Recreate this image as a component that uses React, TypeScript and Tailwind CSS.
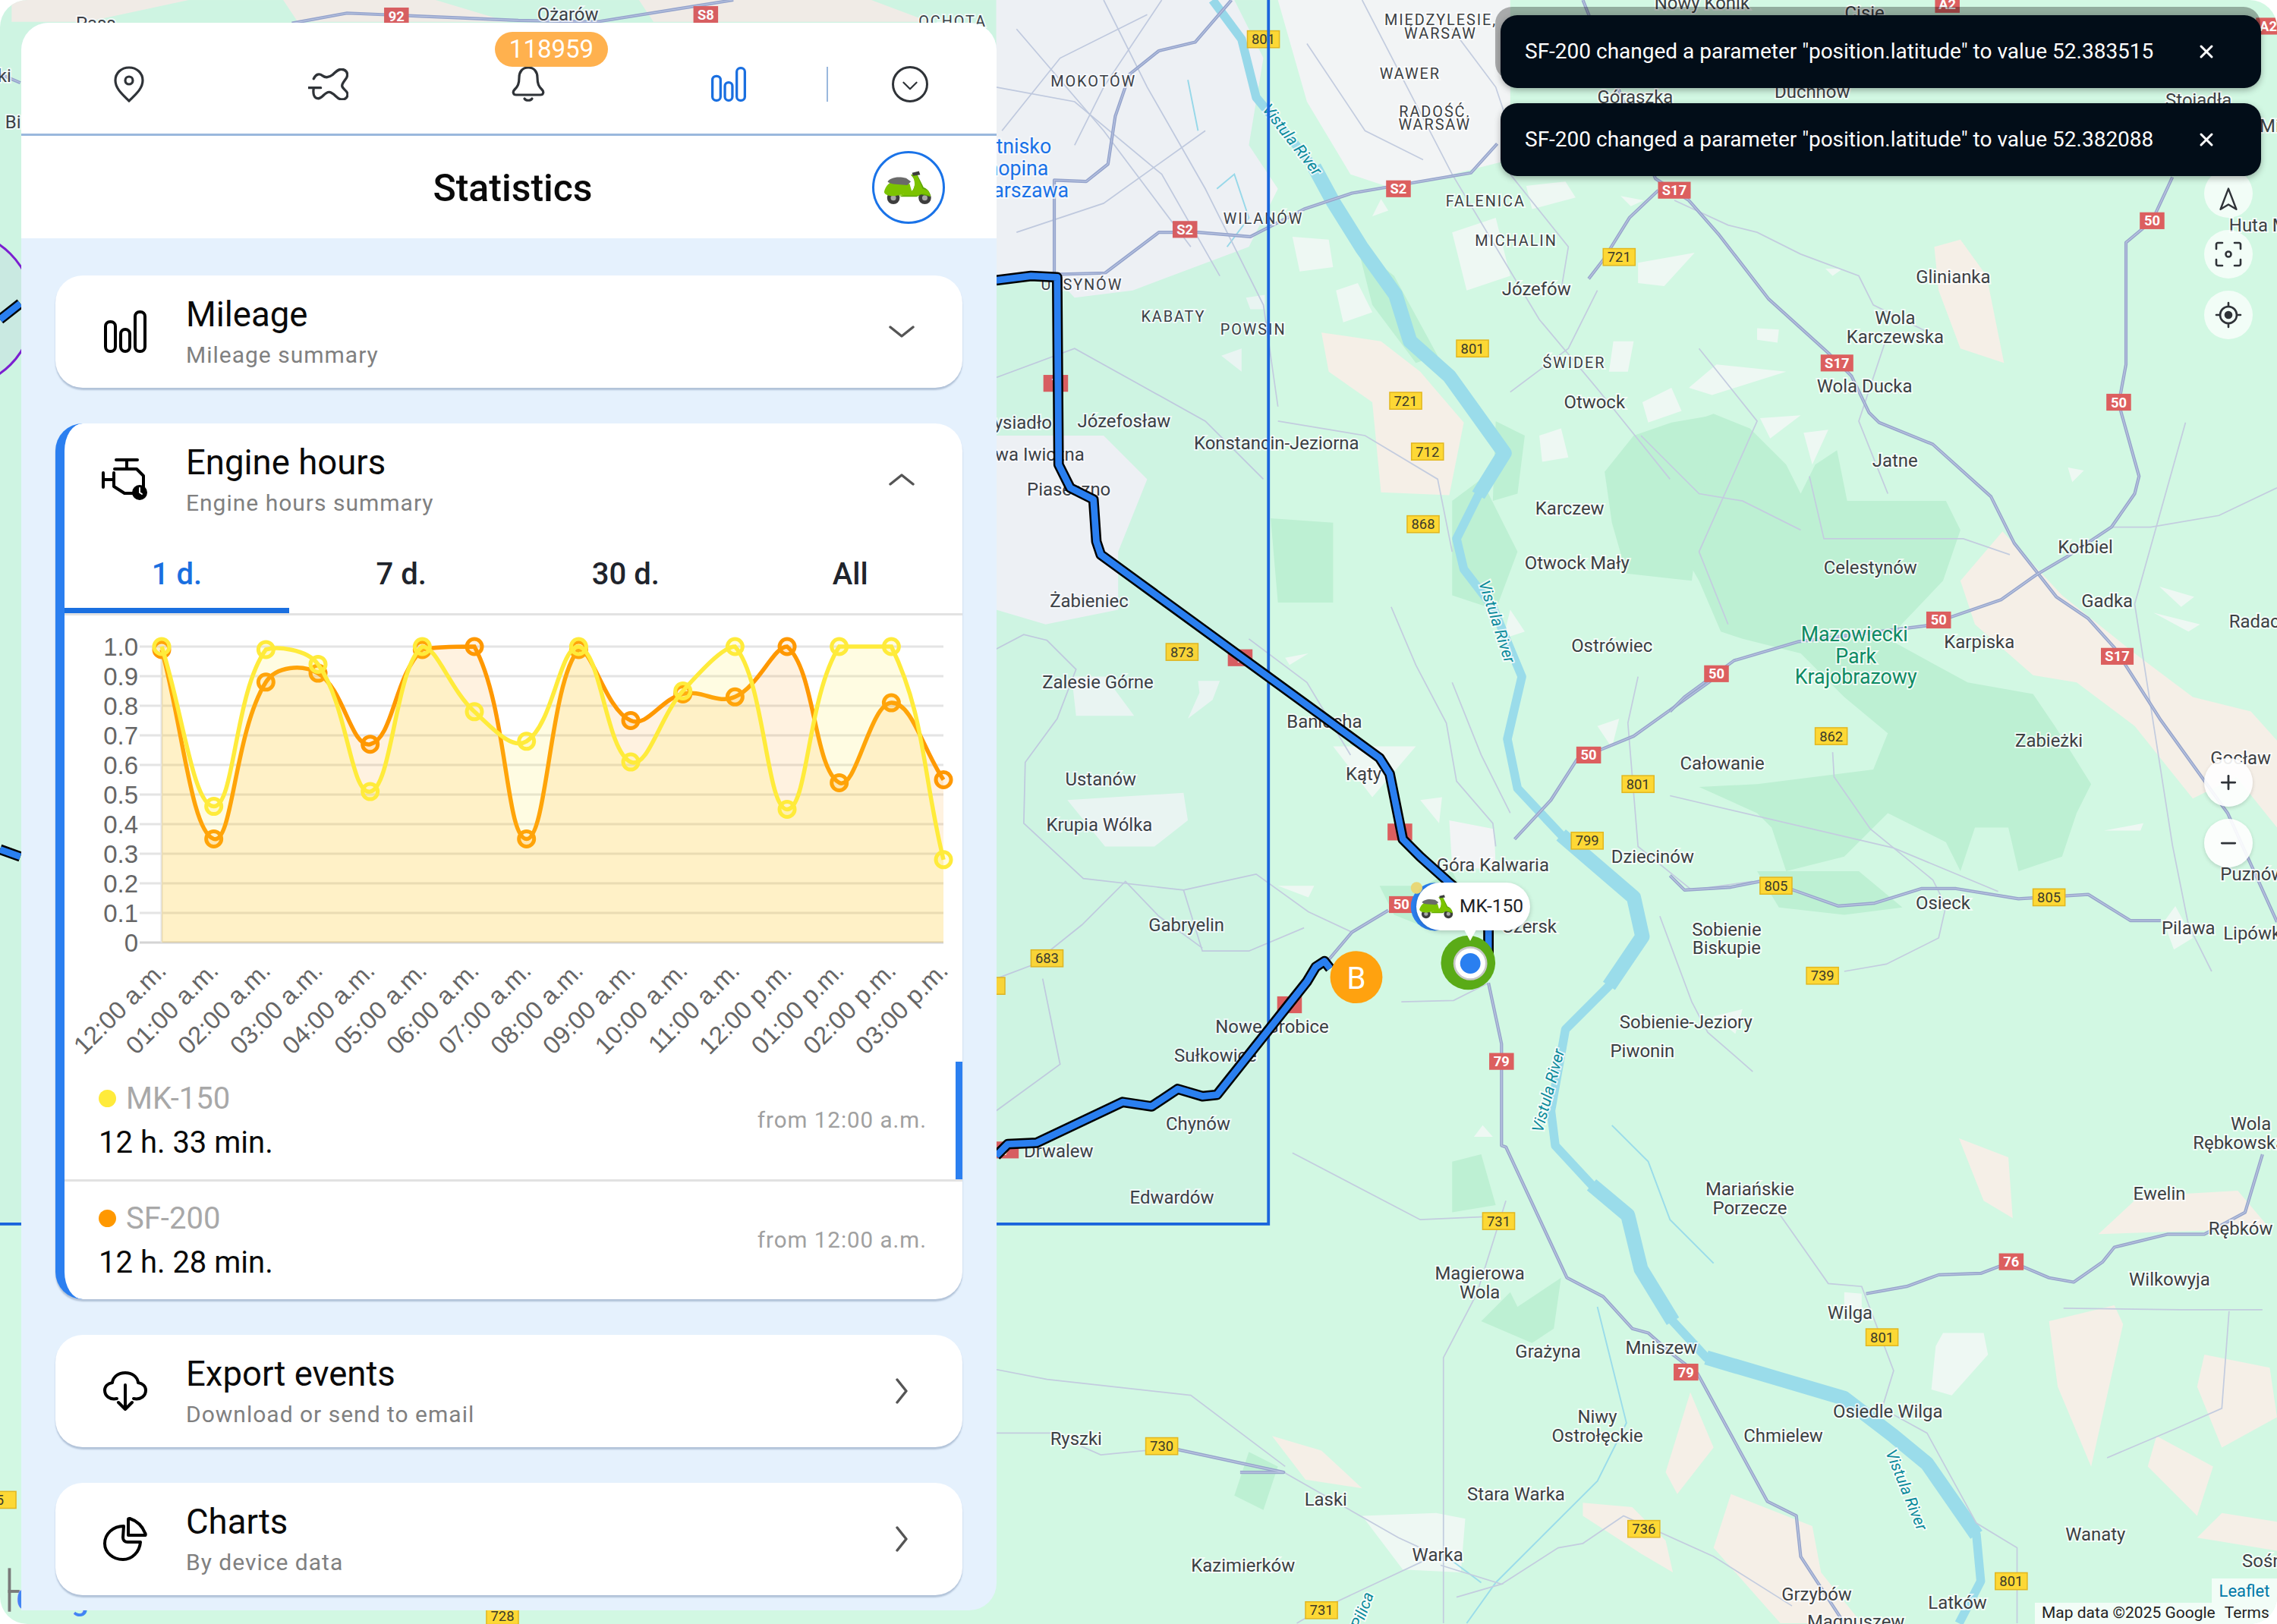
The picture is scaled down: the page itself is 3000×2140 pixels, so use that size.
import React from "react";
import { X, Plus, Minus } from "lucide-react";

const ROBOTO = "font-['Roboto',sans-serif]";

type Pt = [number, number];

const toLine = (pts: Pt[]) => "M" + pts.map((p) => p.join(" ")).join("L");
const toPoly = (pts: Pt[]) => pts.map((p) => p.join(",")).join(" ");

// ---- map data, all coordinates in the 1568 wide viewBox of the map svg ----
const parks: Pt[][] = [
  [[1150,296],[1180,285],[1205,295],[1230,320],[1240,340],[1250,320],[1265,310],[1272,345],[1300,345],[1340,345],[1350,365],[1338,400],[1300,440],[1355,470],[1400,478],[1415,500],[1440,540],[1430,560],[1420,590],[1390,600],[1383,570],[1360,570],[1350,600],[1340,580],[1300,560],[1270,590],[1230,600],[1220,570],[1210,560],[1170,542],[1210,540],[1290,530],[1300,505],[1270,480],[1240,450],[1200,440],[1185,435],[1170,400],[1150,365]],
  [[1105,325],[1125,300],[1151,291],[1180,286],[1165,400],[1120,395],[1110,360]],
  [[1210,600],[1250,600],[1280,600],[1310,625],[1270,630],[1225,625]],
  [[875,357],[918,360],[918,415],[880,415]],
  [[1000,345],[1020,330],[1045,380],[1030,420],[1000,410]],
  [[980,610],[1000,600],[1010,620],[985,640],[960,630],[950,610]],
  [[1040,890],[1045,900],[1075,880],[1070,915],[1055,925],[1020,910]],
  [[1000,800],[1020,795],[1030,830],[1000,835]],
  [[860,1000],[880,1010],[870,1040],[850,1030]],
  [[935,170],[960,190],[990,245],[975,250],[945,210]],
  [[1030,290],[1050,300],[1045,340],[1028,345]],
];

const sand: Pt[][] = [
  [[910,229],[951,235],[978,256],[1008,291],[998,341],[951,339],[945,277],[915,256]],
  [[1379,366],[1420,410],[1470,450],[1510,480],[1550,490],[1568,510],[1568,570],[1540,535],[1510,550],[1470,500],[1430,470],[1400,465],[1360,430],[1350,400]],
  [[1349,784],[1383,797],[1386,839],[1366,827]],
  [[1473,824],[1541,820],[1563,846],[1445,850]],
  [[1411,910],[1456,899],[1462,912],[1440,1010],[1417,955]],
  [[1518,933],[1563,942],[1568,976],[1530,997],[1513,955]],
  [[1485,989],[1524,1010],[1513,1044],[1479,1010]],
  [[1530,1042],[1568,1048],[1568,1068],[1513,1059]],
  [[876,989],[910,999],[938,1025],[899,1019]],
  [[1164,959],[1180,997],[1155,1029],[1147,1014]],
  [[1090,1035],[1124,1038],[1147,1061],[1152,1083],[1130,1070],[1090,1044]],
  [[1192,1029],[1248,1051],[1254,1083],[1282,1118],[1226,1118],[1180,1066]],
  [[1332,170],[1350,165],[1368,190],[1380,250],[1350,240],[1335,200]],
  [[8,0],[130,0],[60,15],[8,15]],
  [[195,0],[300,0],[350,15],[205,15]],
  [[440,0],[600,0],[640,15],[450,15]],
];

const urban: Pt[][] = [
  [[686,0],[850,0],[870,40],[860,100],[880,130],[860,170],[780,200],[740,205],[726,190],[686,190]],
  [[880,0],[1040,0],[1040,110],[1000,120],[960,130],[930,120],[900,70]],
  [[686,300],[760,300],[790,330],[770,380],[770,420],[720,430],[686,420]],
  [[998,565],[1029,571],[1030,599],[1000,597]],
];

// small white settlements scattered over the green
const patches: Pt[][] = [
  [[1163,267],[1182,251],[1230,256],[1179,272]], [[1212,288],[1240,286],[1219,302]], [[1242,298],[1259,296],[1248,320]],
  [[1220,334],[1235,334],[1248,374],[1239,374]], [[1262,382],[1294,379],[1318,392],[1294,414],[1267,406]],
  [[1424,322],[1435,324],[1427,332]], [[1487,404],[1511,411],[1502,418]], [[1483,422],[1515,430],[1507,435]],
  [[1449,572],[1476,567],[1474,572]], [[1490,635],[1498,624],[1510,646],[1497,654]], [[1116,135],[1132,138],[1123,142]],
  [[1128,181],[1167,174],[1146,197],[1128,195]], [[1210,226],[1225,227],[1224,236],[1210,234]], [[1257,185],[1269,185],[1262,190]],
  [[890,163],[915,165],[918,184],[895,187]], [[951,137],[956,145],[945,149]], [[1051,128],[1078,125],[1085,136],[1055,144]],
  [[1111,235],[1125,235],[1121,256],[1108,256]], [[1131,277],[1151,267],[1158,283],[1135,291]], [[841,245],[855,240],[855,256]],
  [[858,205],[871,203],[871,213],[861,213]], [[885,453],[901,450],[888,458]], [[825,469],[840,469],[835,482],[818,495],[826,477]],
  [[738,466],[761,466],[781,493],[741,493]], [[735,551],[815,546],[818,565],[795,583],[761,583]], [[918,514],[975,514],[945,549]],
  [[978,551],[993,549],[991,567]], [[1021,775],[1028,783],[1015,783]], [[880,610],[905,610],[901,618]],
  [[1270,890],[1282,891],[1282,903],[1270,901]], [[1338,918],[1366,918],[1369,933],[1344,961],[1330,957],[1333,927]],
  [[938,1044],[989,1042],[1009,1046],[1006,1083],[966,1081]], [[1000,160],[1030,150],[1040,190],[1010,200]],
  [[1060,300],[1075,295],[1080,315],[1062,318]], [[920,200],[935,195],[945,215],[925,222]], [[1180,700],[1200,695],[1195,712]],
  [[1040,420],[1050,435],[1035,440]], [[1100,500],[1115,495],[1110,515]], [[1200,370],[1220,375],[1205,395]],
];

const river: Pt[] = [[835,0],[855,27],[865,67],[905,115],[918,139],[938,171],[961,203],[971,235],[998,259],[1021,291],[1036,312],[1018,341],[1003,371],[1008,392],[1028,418],[1048,466],[1038,509],[1045,543],[1075,575],[1125,618],[1131,645],[1108,679],[1078,709],[1068,765],[1071,789],[1096,816],[1121,837],[1130,874],[1152,910],[1175,935],[1226,950],[1270,963],[1304,989],[1327,1008],[1361,1057],[1364,1089],[1349,1118]];

const riverWide: Pt[][] = [
  [[905,115],[918,139],[938,171],[961,203],[971,235],[998,259],[1021,291],[1036,312],[1018,341]],
  [[1075,575],[1125,618],[1131,645],[1108,679]],
  [[1096,816],[1121,837],[1130,874],[1152,910]],
  [[1175,935],[1226,950],[1270,963],[1304,989],[1327,1008],[1361,1057]],
];

const streams: Pt[][] = [
  [[818,55],[825,90]],
  [[838,130],[850,120],[860,150],[845,170]],
  [[1110,775],[1135,800],[1150,840],[1180,870]],
  [[1100,900],[1120,980],[1100,1020],[1060,1060],[1030,1090],[1010,1118]],
  [[1000,1075],[1020,1090]],
];

const motorways: Pt[][] = [
  [[1090,0],[1122,80],[1140,123],[1163,138],[1184,162],[1218,206],[1260,244],[1275,259],[1287,284],[1294,291],[1331,306],[1371,342],[1387,374],[1416,411],[1438,426],[1456,446],[1488,496],[1534,560],[1568,635]],
  [[956,627],[931,642],[915,661]],
  [[1043,578],[1068,551],[1086,523],[1125,507],[1178,469]],
  [[1150,490],[1160,480],[1194,455],[1238,442],[1326,431],[1378,413],[1402,396],[1424,383],[1454,363],[1470,340],[1473,328],[1459,278],[1464,251],[1464,167],[1482,152],[1496,122]],
  [[1025,677],[1034,719],[1034,789],[1037,790],[1079,880],[1104,893],[1124,915],[1135,918],[1152,933],[1169,946],[1217,1034],[1237,1044],[1240,1072],[1270,1118]],
  [[848,0],[823,29],[798,35],[778,51],[768,80],[763,113],[748,125],[726,124],[726,189]],
  [[726,189],[761,188],[798,160],[825,160],[861,163],[898,144],[931,133],[1013,119],[1031,99]],
  [[1285,891],[1313,886],[1335,878],[1364,877],[1385,869],[1411,880],[1428,883],[1448,869],[1456,859],[1493,850],[1518,850],[1546,835],[1558,795]],
  [[1150,603],[1160,613],[1192,611],[1212,607],[1235,613],[1266,624],[1291,622],[1323,612],[1347,612],[1390,619],[1438,616],[1467,634],[1488,634]],
  [[201,16],[239,9],[357,14],[411,15],[480,4],[505,0]],
  [[0,51],[14,57]],
  [[1094,192],[1104,179],[1122,150],[1142,131]],
  [[854,1014],[884,1014],[800,996]],
];

const minorRoads: Pt[][] = [
  [[938,0],[1000,120],[1060,220],[1101,269],[1150,330]],
  [[1153,138],[1190,155],[1210,160],[1240,175],[1280,190],[1290,210],[1330,230]],
  [[958,418],[975,458],[996,498],[1003,538],[1028,567],[1030,583]],
  [[686,447],[705,437],[721,441],[741,461],[728,495],[706,525],[705,567],[746,605],[815,613],[865,602],[901,628],[931,642]],
  [[815,613],[828,655],[860,655],[898,639]],
  [[686,674],[710,665],[745,637],[775,607],[798,631],[828,653]],
  [[718,674],[730,733],[686,765]],
  [[965,690],[1001,689],[1025,677]],
  [[1128,466],[1121,498],[1128,583],[1165,613],[1207,607]],
  [[1143,631],[1165,690],[1176,711],[1207,738]],
  [[1226,837],[1259,884],[1282,886],[1304,944],[1296,970],[1327,987],[1361,1049],[1389,1066],[1389,1118]],
  [[685,987],[724,987],[758,1002],[789,999]],
  [[884,1014],[963,1059],[989,1071],[910,1108],[893,1118]],
  [[992,1078],[1034,1091],[1003,1100]],
  [[1034,1091],[1073,1066],[1090,1063],[1118,1044],[1180,1072],[1234,1106]],
  [[685,943],[721,950],[820,961],[885,1010]],
  [[994,1118],[994,935],[1017,891],[1037,827]],
  [[890,794],[978,840],[1022,838]],
  [[1421,901],[1501,902],[1558,902]],
  [[1451,1004],[1498,984],[1530,970],[1535,903]],
  [[1454,363],[1481,363],[1528,355],[1568,336]],
  [[1246,328],[1256,371],[1352,371],[1384,382]],
  [[1262,518],[1263,535],[1288,571],[1304,584],[1331,606],[1340,624],[1335,646],[1299,664],[1270,669]],
  [[1150,548],[1304,584],[1376,614]],
  [[1505,291],[1470,416],[1496,582],[1507,637],[1523,669]],
  [[760,0],[790,60],[830,130],[870,210],[880,280]],
  [[686,60],[740,70],[800,120],[840,190]],
  [[686,260],[740,240],[830,290],[870,330]],
  [[880,290],[940,300],[990,330],[1000,380]],
  [[1100,200],[1080,240],[1040,270]],
  [[1130,300],[1170,340],[1200,345],[1240,365]],
  [[1040,560],[1020,520],[1000,470]],
  [[800,0],[760,60],[740,100]],
  [[700,20],[760,90],[820,170]],
  [[690,90],[730,40],[790,10]],
  [[700,160],[760,140],[830,90]],
  [[900,30],[940,90],[980,110]],
  [[1000,20],[1030,60],[1040,90]],
  [[1170,240],[1210,290],[1170,380],[1190,430]],
  [[1300,230],[1280,290],[1300,340]],
  [[860,440],[900,470],[930,520]],
  [[1040,120],[1080,170],[1075,200]],
];

const shieldsRed: [string, number, number][] = [
  ["92", 273, 11], ["S8", 486, 10], ["A2", 1341, 3], ["A2", 1562, 18], ["S17", 1153, 131],
  ["50", 1482, 152], ["S17", 1265, 250], ["S2", 963, 130], ["S2", 816, 158], ["7", 727, 264],
  ["7", 854, 453], ["50", 1182, 464], ["50", 1094, 520], ["7", 964, 573], ["50", 965, 623],
  ["79", 1034, 731], ["7", 888, 692], ["7", 693, 792], ["50", 1459, 277], ["50", 1335, 427],
  ["S17", 1458, 452], ["76", 1385, 869], ["79", 1161, 945],
];

const shieldsYellow: [string, number, number][] = [
  ["801", 870, 27], ["801", 1014, 240], ["721", 1115, 177], ["721", 968, 276], ["712", 983, 311],
  ["868", 980, 361], ["873", 814, 449], ["683", 721, 660], ["7", 681, 679], ["801", 1128, 540],
  ["799", 1093, 579], ["862", 1261, 507], ["805", 1223, 610], ["805", 1411, 618], ["739", 1255, 672],
  ["731", 1032, 841], ["801", 1296, 921], ["730", 800, 996], ["736", 1132, 1053], ["731", 910, 1109],
  ["801", 1385, 1089], ["728", 346, 1113], ["5", 0, 1033],
];

const places: [string, number, number][] = [
  ["Pass", 66, 16], ["Ożarów", 391, 10], ["Józefów", 1058, 199], ["Otwock", 1098, 277], ["Karczew", 1081, 350],
  ["Otwock Mały", 1086, 388], ["Józefosław", 774, 290], ["Mysiadło", 699, 291], ["Nowa Iwiczna", 708, 313],
  ["Konstancin-Jeziorna", 879, 305], ["Piaseczno", 736, 337], ["Żabieniec", 750, 414], ["Ostrówiec", 1110, 445],
  ["Zalesie Górne", 756, 470], ["Ustanów", 758, 537], ["Krupia Wólka", 757, 568], ["Gabryelin", 817, 637],
  ["Baniocha", 912, 497], ["Kąty", 939, 533], ["Góra Kalwaria", 1028, 596], ["Całowanie", 1186, 526],
  ["Dziecinów", 1138, 590], ["Czersk", 1053, 638], ["Sobienie", 1189, 640], ["Biskupie", 1189, 653],
  ["Sobienie-Jeziory", 1161, 704], ["Piwonin", 1131, 724], ["Nowe Grobice", 876, 707], ["Sułkowice", 837, 727],
  ["Chynów", 825, 774], ["Drwalew", 729, 793], ["Edwardów", 807, 825], ["Mariańskie", 1205, 819],
  ["Porzecze", 1205, 832], ["Wola Ducka", 1284, 266], ["Jatne", 1305, 317], ["Kołbiel", 1436, 377],
  ["Celestynów", 1288, 391], ["Gadka", 1451, 414], ["Karpiska", 1363, 442], ["Zabieżki", 1411, 510],
  ["Gocław", 1543, 522], ["Osieck", 1338, 622], ["Pilawa", 1507, 639], ["Nowy Konik", 1172, 2],
  ["Cisie", 1284, 9], ["Góraszka", 1126, 67], ["Duchnów", 1248, 63], ["Stojadła", 1514, 69],
  ["Glinianka", 1345, 191], ["Wola", 1305, 219], ["Karczewska", 1305, 232], ["Wola", 1550, 774],
  ["Rębkowska", 1542, 787], ["Rębków", 1543, 846], ["Ewelin", 1487, 822], ["Wilkowyja", 1494, 881],
  ["Magierowa", 1019, 877], ["Wola", 1019, 890], ["Grażyna", 1066, 931], ["Mniszew", 1144, 928],
  ["Wilga", 1274, 904], ["Osiedle Wilga", 1300, 972], ["Chmielew", 1228, 989], ["Niwy", 1100, 976],
  ["Ostrołęckie", 1100, 989], ["Ryszki", 741, 991], ["Stara Warka", 1044, 1029], ["Laski", 913, 1033],
  ["Warka", 990, 1071], ["Kazimierków", 856, 1078], ["Wanaty", 1443, 1057], ["Grzybów", 1251, 1098],
  ["Latków", 1348, 1104], ["Magnuszew", 1278, 1117], ["ki", 3, 52], ["Bi", 9, 84],
];

const placesLeft: [string, number, number][] = [
  ["Radachów", 1535, 428], ["Lipówka", 1531, 643], ["Puznów", 1529, 602], ["Huta M", 1535, 155],
  ["Sośnia", 1544, 1075], ["Mien", 1556, 87],
];

const districts: [string, number, number][] = [
  ["MIĘDZYLESIE,", 992, 14], ["WARSAW", 992, 23], ["WAWER", 971, 51], ["RADOŚĆ,", 988, 77], ["WARSAW", 988, 86],
  ["MOKOTÓW", 753, 56], ["FALENICA", 1023, 139], ["MICHALIN", 1044, 166], ["WILANÓW", 870, 151],
  ["URSYNÓW", 745, 196], ["KABATY", 808, 218], ["POWSIN", 863, 227], ["ŚWIDER", 1084, 250], ["OCHOTA", 656, 15],
];

const riverNames: [string, number, number, number][] = [
  ["Vistula River", 890, 96, 52], ["Vistula River", 1031, 428, 72], ["Vistula River", 1066, 751, -75],
  ["Vistula River", 1313, 1026, 68], ["Pilica", 938, 1109, -70],
];

const routeNorth: Pt[] = [[686,193],[710,190],[728,191],[729,320],[737,336],[753,344],[755,373],[758,382],[950,522],[957,533],[966,578],[978,590],[997,607],[1010,618],[1025,640],[1025,660]];
const routeSouth: Pt[] = [[916,667],[912,662],[906,666],[900,676],[838,754],[828,755],[811,750],[793,762],[773,759],[714,787],[694,788],[686,796]];

function MapCanvas() {
  return (
    <svg viewBox="0 0 1568 1118.47" className={`absolute inset-0 h-[2140px] w-[3000px] ${ROBOTO}`}>
      <rect width="1568" height="1119" fill="#d2f8e3" />
      {urban.map((p, i) => <polygon key={i} points={toPoly(p)} fill="#f2f4f5" />)}
      {patches.map((p, i) => <polygon key={i} points={toPoly(p)} fill="#eef8f3" />)}
      {parks.map((p, i) => <polygon key={i} points={toPoly(p)} fill="#bdf0d3" />)}
      {sand.map((p, i) => <polygon key={i} points={toPoly(p)} fill="#f5efe7" />)}
      <path d={toLine(river)} fill="none" stroke="#9adcea" strokeWidth="6" strokeLinejoin="round" />
      {riverWide.map((p, i) => <path key={i} d={toLine(p)} fill="none" stroke="#9adcea" strokeWidth="10" strokeLinejoin="round" />)}
      {streams.map((p, i) => <path key={i} d={toLine(p)} fill="none" stroke="#9adcea" strokeWidth="1" />)}
      {minorRoads.map((p, i) => <path key={i} d={toLine(p)} fill="none" stroke="#c3ccdf" strokeWidth="0.9" />)}
      {motorways.map((p, i) => (
        <g key={i} fill="none" strokeLinejoin="round">
          <path d={toLine(p)} stroke="#98a6cc" strokeWidth="2.2" />
          <path d={toLine(p)} stroke="#bcc7e2" strokeWidth="0.6" />
        </g>
      ))}

      {/* labels */}
      <g fill="#3c4043" stroke="#ffffff" strokeWidth="2" strokeOpacity="0.75" className="[paint-order:stroke]" fontSize="12.5" textAnchor="middle" dominantBaseline="central">
        {places.map(([t, x, y], i) => <text key={i} x={x} y={y}>{t}</text>)}
        {placesLeft.map(([t, x, y], i) => <text key={i} x={x} y={y} textAnchor="start">{t}</text>)}
        <g fontSize="10.4" letterSpacing="1">
          {districts.map(([t, x, y], i) => <text key={i} x={x} y={y}>{t}</text>)}
        </g>
        <g fill="#0e8a63" fontSize="14">
          <text x="1277" y="437">Mazowiecki</text>
          <text x="1278" y="452">Park</text>
          <text x="1278" y="466">Krajobrazowy</text>
        </g>
        <g fill="#1a73e8" fontSize="14" textAnchor="end">
          <text x="724" y="101">Lotnisko</text>
          <text x="722" y="116">Chopina</text>
          <text x="736" y="131">Warszawa</text>
        </g>
        <g fill="#0b8a9b" fontSize="11" fontStyle="italic">
          {riverNames.map(([t, x, y, r], i) => (
            <text key={i} x={x} y={y} transform={`rotate(${r} ${x} ${y})`}>{t}</text>
          ))}
        </g>
      </g>

      {/* road shields */}
      <g textAnchor="middle" dominantBaseline="central" fontSize="9.6">
        {shieldsRed.map(([t, x, y], i) => {
          const w = t.length > 2 ? 22.5 : 17;
          return (
            <g key={i}>
              <rect x={x - w / 2} y={y - 5.8} width={w} height="11.6" fill="#dc5f5f" />
              <text x={x} y={y} fill="#ffffff" fontWeight="700">{t}</text>
            </g>
          );
        })}
        {shieldsYellow.map(([t, x, y], i) => (
          <g key={i}>
            <rect x={x - 11} y={y - 5.8} width="22" height="11.6" fill="#fdd835" stroke="#e2b720" strokeWidth="0.8" />
            <text x={x} y={y} fill="#3b3b2a">{t}</text>
          </g>
        ))}
      </g>

      {/* polygon around the tracked area */}
      <rect x="-10" y="-10" width="883.5" height="853" fill="#1a64dc" fillOpacity="0.025" stroke="#1a64dc" strokeWidth="2" />
      <circle cx="-31" cy="213" r="54" fill="#7b1fd0" fillOpacity="0.05" stroke="#7b1fd0" strokeWidth="1.6" />

      {/* route */}
      <g fill="none" strokeLinejoin="round">
        <path d={toLine(routeNorth)} stroke="#000000" strokeWidth="7.2" />
        <path d={toLine(routeSouth)} stroke="#000000" strokeWidth="7.2" />
        <path d="M0 220L14 209M0 585L14 590" stroke="#000000" strokeWidth="7.2" />
        <path d={toLine(routeNorth)} stroke="#2a7ff0" strokeWidth="4.6" />
        <path d={toLine(routeSouth)} stroke="#2a7ff0" strokeWidth="4.6" />
        <path d="M0 220L14 209M0 585L14 590" stroke="#2a7ff0" strokeWidth="4.6" />
      </g>

      {/* Google logo under the panel edge */}
      <rect x="5.5" y="1080" width="2" height="30" fill="#7a7a7a" />
      <rect x="5.5" y="1095" width="8" height="2" fill="#7a7a7a" />
      <text x="11" y="1109" fontSize="21" fontWeight="500">
        <tspan fill="#4285f4">G</tspan><tspan fill="#ea4335">o</tspan><tspan fill="#fbbc05">o</tspan><tspan fill="#4285f4">g</tspan><tspan fill="#34a853">l</tspan><tspan fill="#ea4335">e</tspan>
      </text>

      {/* markers */}
      <circle cx="934" cy="673" r="18" fill="#ffa20f" />
      <text x="934" y="674" fill="#ffffff" fontSize="21" textAnchor="middle" dominantBaseline="central">B</text>
      <circle cx="1011" cy="663" r="18.7" fill="#5aab17" />
      <circle cx="1012.5" cy="663.5" r="11" fill="#ffffff" stroke="#c8c8c8" strokeWidth="1.4" />
      <circle cx="1012.5" cy="663.5" r="7" fill="#2a7ff0" />
      <circle cx="988" cy="624.5" r="16.5" fill="#2a7ff0" />
      <circle cx="975.5" cy="611.5" r="4" fill="#e8d878" />
    </svg>
  );
}

function Scooter({ className }: { className?: string }) {
  return (
    <svg viewBox="0 0 44 30" className={className}>
      <circle cx="9" cy="24" r="5.4" fill="#3d3d3d" />
      <circle cx="9" cy="24" r="2.3" fill="#a8a8a8" />
      <circle cx="36" cy="24" r="5.4" fill="#3d3d3d" />
      <circle cx="36" cy="24" r="2.3" fill="#a8a8a8" />
      <path d="M1 19C2 14 6 9 13 9L23 12L25 19L12 22C7 23 2 22 1 19Z" fill="#7cc300" />
      <path d="M24 4L29 3L35 15C38 16 41 19 41 23L33 21L29 23H14L24 19C27 17 28 12 27 8Z" fill="#5da600" />
      <path d="M25 4L29 3.5L34 16L39 18L41 23C37 20 33 20 30 22H13L25 18C28 15 28 10 25 4Z" fill="#7cc300" />
      <path d="M4 10C6 7 12 5 20 7L24 10L21 13L9 12C7 12 5 11 4 10Z" fill="#6a6a6a" />
      <path d="M25 2.5L31 1L32 4L26 5Z" fill="#3d3d3d" />
    </svg>
  );
}

const stroke = { fill: "none", stroke: "currentColor", strokeLinecap: "round", strokeLinejoin: "round" } as const;

function BarsIcon({ className }: { className?: string }) {
  return (
    <svg viewBox="0 0 56 56" className={className} {...stroke} strokeWidth="4">
      <rect x="2" y="15" width="13" height="39" rx="6" />
      <rect x="22" y="25" width="12" height="29" rx="6" />
      <rect x="41" y="2" width="13" height="52" rx="6" />
    </svg>
  );
}

function Chevron({ dir }: { dir: "down" | "up" | "right" }) {
  const d = dir === "down" ? "M2 2L17 14L32 2" : dir === "up" ? "M2 14L17 2L32 14" : "M2 2L14 17L2 32";
  return (
    <svg viewBox={dir === "right" ? "0 0 16 34" : "0 0 34 16"} className={dir === "right" ? "h-[34px] w-[16px] text-[#555555]" : "h-[16px] w-[34px] text-[#555555]"} {...stroke} strokeWidth="3.4">
      <path d={d} />
    </svg>
  );
}

function EngineIcon() {
  return (
    <svg viewBox="0 0 62 56" className="h-[56px] w-[62px]" {...stroke} strokeWidth="4">
      <path d="M19 2H47M33 2V14M17 14H46L55 23V38" />
      <path d="M2 19V38M2 28H16M16 19V37L30 46H42" />
      <circle cx="50" cy="45" r="9" fill="#000000" stroke="#000000" strokeWidth="2" />
      <path d="M50 39V45L53 47" stroke="#ffffff" strokeWidth="2" />
    </svg>
  );
}

function CloudIcon() {
  return (
    <svg viewBox="0 0 58 52" className="h-[52px] w-[58px]" {...stroke} strokeWidth="4">
      <path d="M18 36C8 38 2 32 2 25C2 20 6 16 12 15C13 7 20 2 29 2C38 2 45 7 46 15C52 16 56 20 56 25C56 32 50 38 40 36" />
      <path d="M29 18V50M20 41L29 50L38 41" />
    </svg>
  );
}

function PieIcon() {
  return (
    <svg viewBox="0 0 58 58" className="h-[58px] w-[58px]" {...stroke} strokeWidth="4">
      <path d="M27 12C13 12 2 22 2 35C2 47 13 56 26 56C38 56 48 46 49 33H32C28 33 26 30 26 27Z" />
      <path d="M33 3V24H55C56 24 56 22 55 21C51 11 44 5 35 2C34 2 33 2 33 3Z" />
    </svg>
  );
}

function NavIcons() {
  return (
    <div className="relative flex h-[146px] items-center pl-[11px] pt-[15px] text-[#2f3338]">
      <div className="flex w-[262px] justify-center">
        <svg viewBox="0 0 40 48" className="h-[48px] w-[40px]" {...stroke} strokeWidth="3.2">
          <path d="M20 46C12 38 2 30 2 19C2 9 10 2 20 2C30 2 38 9 38 19C38 30 28 38 20 46Z" />
          <circle cx="20" cy="19" r="5" />
        </svg>
      </div>
      <div className="flex w-[262px] justify-center">
        <svg viewBox="0 0 51 40" className="h-[42px] w-[53px]" {...stroke} strokeWidth="3.2">
          <path d="M0.5 24.5H16M7 13C10 7 14 6 18 9C22 12 26 12 31 8C35 4 38 1 42 1C48 1 51 6 49 11C47 15 43 18 43 22C43 26 50 28 50 33C50 38 45 40 41 39C36 38 33 31 27 30C21 29 18 39 12 38C7 37 6 31 7 25" />
        </svg>
      </div>
      <div className="relative flex w-[262px] justify-center">
        <svg viewBox="0 0 44 48" className="ml-[3px] h-[48px] w-[44px]" {...stroke} strokeWidth="3.2">
          <path d="M22 2C14 2 10 8 10 15C10 24 8 27 4 31C1 34 2 38 6 38H38C42 38 43 34 40 31C36 27 34 24 34 15C34 8 30 2 22 2Z" />
          <path d="M17 43C19 46 25 46 27 43" />
        </svg>
        <span className="absolute left-[89px] top-[-45px] flex h-[46px] w-[149px] items-center justify-center rounded-full bg-[#ffb14e] text-[33px] leading-none text-white">118959</span>
      </div>
      <div className="flex w-[262px] justify-center pl-[8px] text-[#1a6fe0]">
        <BarsIcon className="h-[48px] w-[46px]" />
      </div>
      <div className="ml-[2px] h-[46px] w-[2px] bg-[#9ab8dd]" />
      <div className="ml-[84px] flex h-[48px] w-[48px] items-center justify-center rounded-full border-[3px] border-[#2f3338]">
        <svg viewBox="0 0 24 14" className="mt-[4px] h-[12px] w-[22px]" {...stroke} strokeWidth="2.6">
          <path d="M2 2L12 12L22 2" />
        </svg>
      </div>
    </div>
  );
}

function CardHeader({ icon, title, sub, dir }: { icon: React.ReactNode; title: string; sub: string; dir: "down" | "up" | "right" }) {
  return (
    <div className="flex h-[148px] items-center">
      <div className="flex w-[172px] justify-center pl-[12px]">{icon}</div>
      <div className="flex grow flex-col gap-[10px] pt-[1px]">
        <div className="text-[45.5px] leading-[50px] text-[#0a0a0a]">{title}</div>
        <div className="text-[30px] leading-[36px] tracking-[1px] text-[#808080]">{sub}</div>
      </div>
      <div className="flex w-[160px] justify-center">
        <Chevron dir={dir} />
      </div>
    </div>
  );
}

const cardClass = "rounded-[36px] bg-white shadow-[0_3px_2px_rgba(100,125,160,0.4)]";

// ---- chart ----
const yellowData = [1, 0.46, 0.99, 0.94, 0.51, 1, 0.78, 0.68, 1, 0.61, 0.85, 1, 0.45, 1, 1, 0.28];
const orangeData = [0.99, 0.35, 0.88, 0.91, 0.67, 0.99, 1, 0.35, 0.99, 0.75, 0.84, 0.83, 1, 0.54, 0.81, 0.55];
const hours = ["12:00 a.m.", "01:00 a.m.", "02:00 a.m.", "03:00 a.m.", "04:00 a.m.", "05:00 a.m.", "06:00 a.m.", "07:00 a.m.", "08:00 a.m.", "09:00 a.m.", "10:00 a.m.", "11:00 a.m.", "12:00 p.m.", "01:00 p.m.", "02:00 p.m.", "03:00 p.m."];
const X0 = 128;
const STEP = 68.67;
const Y0 = 431;
const YH = 390;

const chartPts = (data: number[]): Pt[] => data.map((v, i) => [X0 + i * STEP, Y0 - v * YH]);

// same bezier the chart lib draws with tension 0.4, control points capped to the plot area
function splinePath(pts: Pt[]) {
  const t = 0.4;
  const cap = (y: number) => Math.min(Math.max(y, Y0 - YH), Y0);
  const ctrl = pts.map((p, i) => {
    const prev = pts[Math.max(i - 1, 0)];
    const next = pts[Math.min(i + 1, pts.length - 1)];
    const d01 = Math.hypot(p[0] - prev[0], p[1] - prev[1]);
    const d12 = Math.hypot(next[0] - p[0], next[1] - p[1]);
    const s01 = d01 + d12 === 0 ? 0 : d01 / (d01 + d12);
    const s12 = 1 - s01;
    return {
      a: [p[0] - t * s01 * (next[0] - prev[0]), cap(p[1] - t * s01 * (next[1] - prev[1]))],
      b: [p[0] + t * s12 * (next[0] - prev[0]), cap(p[1] + t * s12 * (next[1] - prev[1]))],
    };
  });
  let d = `M${pts[0][0]} ${pts[0][1]}`;
  for (let i = 1; i < pts.length; i++) {
    d += `C${ctrl[i - 1].b[0]} ${ctrl[i - 1].b[1]} ${ctrl[i].a[0]} ${ctrl[i].a[1]} ${pts[i][0]} ${pts[i][1]}`;
  }
  return d;
}

function Series({ data, color, fill }: { data: number[]; color: string; fill: string }) {
  const pts = chartPts(data);
  const line = splinePath(pts);
  return (
    <g>
      <path d={`${line}L${pts[pts.length - 1][0]} ${Y0}L${X0} ${Y0}Z`} fill={fill} />
      <path d={line} fill="none" stroke={color} strokeWidth="5.5" />
      {pts.map((p, i) => (
        <circle key={i} cx={p[0]} cy={p[1]} r="10" fill={fill} stroke={color} strokeWidth="5" />
      ))}
    </g>
  );
}

function EngineChart() {
  const ticks = ["0", "0.1", "0.2", "0.3", "0.4", "0.5", "0.6", "0.7", "0.8", "0.9", "1.0"];
  return (
    <svg viewBox="0 0 1182 588" className="h-[588px] w-[1182px] font-['Liberation_Sans',sans-serif]">
      {ticks.map((t, i) => {
        const y = Y0 - i * 39;
        return (
          <g key={t}>
            <line x1="99" x2="1158" y1={y} y2={y} stroke={i === 0 ? "#d4d4d4" : "#e4e4e4"} strokeWidth="3" />
            <text x="97" y={y} textAnchor="end" dominantBaseline="central" fontSize="33" fill="#666666">{t}</text>
          </g>
        );
      })}
      <line x1={X0} x2={X0} y1={Y0 - YH} y2={Y0} stroke="#e4e4e4" strokeWidth="3" />
      <Series data={orangeData} color="#ff9800" fill="rgba(255,152,0,0.12)" />
      <Series data={yellowData} color="#ffeb3b" fill="rgba(255,235,59,0.15)" />
      {hours.map((h, i) => {
        const x = X0 + i * STEP + 8;
        return (
          <text key={i} x={x} y={Y0 + 39} textAnchor="end" fontSize="33" fill="#666666" transform={`rotate(-45 ${x} ${Y0 + 39})`}>{h}</text>
        );
      })}
    </svg>
  );
}

function DeviceRow({ name, dot, time, bar }: { name: string; dot: string; time: string; bar?: boolean }) {
  return (
    <div className={bar
      ? "flex h-[155px] items-center justify-between border-r-[9px] border-r-[#2b7ff0] pl-[45px] pr-[38px]"
      : "flex h-[155px] items-center justify-between pl-[45px] pr-[47px]"}>
      <div className="flex flex-col gap-[10px]">
        <div className="flex items-center gap-[13px] text-[40px] leading-[48px] text-[#a8a8a8]">
          <span className={`h-[23px] w-[23px] rounded-full ${dot}`} />
          {name}
        </div>
        <div className="text-[40px] leading-[48px] text-[#0a0a0a]">{time}</div>
      </div>
      <div className="text-[29.5px] tracking-[1px] text-[#a0a0a0]">from 12:00 a.m.</div>
    </div>
  );
}

export default function App() {
  return (
    <div className={`relative h-[2140px] w-[3000px] overflow-hidden rounded-[36px] bg-white ${ROBOTO}`}>
      <MapCanvas />

      {/* stats panel */}
      <div className="absolute left-[28px] top-[30px] h-[2092px] w-[1285px] overflow-hidden rounded-t-[36px] rounded-br-[36px] bg-[#e5f1fd]">
        <div className="bg-white">
          <NavIcons />
          <div className="h-[3px] bg-[#9ab8dd]" />
          <div className="relative flex h-[135px] items-center justify-center pl-[10px] pt-[2px]">
            <span className="text-[50px] font-medium leading-none text-[#0a0a0a]">Statistics</span>
            <div className="absolute right-[68px] top-[20px] flex h-[96px] w-[96px] items-center justify-center rounded-full border-[3px] border-[#1a73e8]">
              <Scooter className="h-[46px] w-[68px]" />
            </div>
          </div>
        </div>

        <div className="flex flex-col gap-[47px] px-[45px] pt-[49px]">
          <div className={cardClass}>
            <CardHeader icon={<BarsIcon className="h-[56px] w-[56px] text-black" />} title="Mileage" sub="Mileage summary" dir="down" />
          </div>

          <div className={`${cardClass} overflow-hidden border-l-[12px] border-l-[#2b7ff0]`}>
            <div className="-ml-[12px]">
              <CardHeader icon={<EngineIcon />} title="Engine hours" sub="Engine hours summary" dir="up" />
            </div>
            <div className="flex h-[105px] border-b-[3px] border-b-[#e2e2e2] text-[40px] font-medium text-[#20242c]">
              <div className="flex w-[296px] items-center justify-center border-b-[7px] border-b-[#1a6fe0] pt-[7px] text-[#1a6fe0]">1 d.</div>
              <div className="flex w-[296px] items-center justify-center pb-[1px]">7 d.</div>
              <div className="flex w-[296px] items-center justify-center pb-[1px]">30 d.</div>
              <div className="flex w-[296px] items-center justify-center pb-[1px]">All</div>
            </div>
            <EngineChart />
            <div className="border-b-[3px] border-b-[#e2e2e2]">
              <DeviceRow name="MK-150" dot="bg-[#ffeb3b]" time="12 h. 33 min." bar />
            </div>
            <DeviceRow name="SF-200" dot="bg-[#ff9800]" time="12 h. 28 min." />
          </div>

          <div className={cardClass}>
            <CardHeader icon={<CloudIcon />} title="Export events" sub="Download or send to email" dir="right" />
          </div>

          <div className={cardClass}>
            <CardHeader icon={<PieIcon />} title="Charts" sub="By device data" dir="right" />
          </div>
        </div>
      </div>

      {/* device label on the map */}
      <div className="absolute left-[1866px] top-[1163px] flex h-[63px] w-[150px] items-center gap-[6px] rounded-full bg-white pl-[3px] text-[24.5px] text-[#202124] shadow-[0_2px_6px_rgba(0,0,0,0.2)]">
        <Scooter className="h-[33px] w-[48px]" />
        <span>MK-150</span>
        <div className="absolute left-[63px] top-[62px] h-0 w-0 border-x-[8px] border-t-[15px] border-x-transparent border-t-white" />
      </div>

      {/* map controls */}
      <div className="absolute right-[32px] top-[223px] flex flex-col gap-[16px] text-[#2f3338]">
        <div className="flex h-[64px] w-[64px] items-center justify-center rounded-full bg-white/70">
          <svg viewBox="0 0 30 40" className="mt-[16px] h-[32px] w-[26px]" {...stroke} strokeWidth="3">
            <path d="M15 2L28 36L15 28L2 36Z" />
          </svg>
        </div>
        <div className="flex h-[64px] w-[64px] items-center justify-center rounded-full bg-white/70">
          <svg viewBox="0 0 36 34" className="h-[34px] w-[36px]" {...stroke} strokeWidth="2.6">
            <path d="M2 10V4C2 3 3 2 4 2H10M26 2H32C33 2 34 3 34 4V10M34 24V30C34 31 33 32 32 32H26M10 32H4C3 32 2 31 2 30V24" />
            <circle cx="18" cy="17" r="3.5" />
          </svg>
        </div>
        <div className="flex h-[64px] w-[64px] items-center justify-center rounded-full bg-white/70">
          <svg viewBox="0 0 36 36" className="h-[36px] w-[36px]" {...stroke} strokeWidth="2.6">
            <circle cx="18" cy="18" r="11" />
            <circle cx="18" cy="18" r="4" fill="currentColor" />
            <path d="M18 2V7M18 29V34M2 18H7M29 18H34" />
          </svg>
        </div>
      </div>
      <div className="absolute right-[32px] top-[999px] flex flex-col gap-[16px] text-[#2f3338]">
        <div className="flex h-[64px] w-[64px] items-center justify-center rounded-full bg-white/90 shadow-[0_2px_5px_rgba(0,0,0,0.15)]">
          <Plus className="h-[30px] w-[30px]" strokeWidth={2.2} />
        </div>
        <div className="flex h-[64px] w-[64px] items-center justify-center rounded-full bg-white/90 shadow-[0_2px_5px_rgba(0,0,0,0.15)]">
          <Minus className="h-[30px] w-[30px]" strokeWidth={2.2} />
        </div>
      </div>

      {/* toasts */}
      <div className="absolute left-[1977px] top-[20px] flex w-[1002px] flex-col gap-[20px]">
        <div className="absolute -top-[11px] left-[-7px] h-[96px] w-[1008px] rounded-[22px] bg-black/30" />
        {["52.383515", "52.382088"].map((v) => (
          <div key={v} className="relative flex h-[96px] items-center justify-between rounded-[22px] bg-[#020d18] pl-[32px] pr-[58px] text-[28px] text-white shadow-[0_3px_8px_rgba(0,0,0,0.3)]">
            <span className="whitespace-nowrap">SF-200 changed a parameter "position.latitude" to value {v}</span>
            <X className="h-[28px] w-[28px]" strokeWidth={2.6} />
          </div>
        ))}
      </div>

      {/* attribution */}
      <div className="absolute bottom-[28px] right-0 flex h-[32px] w-[86px] items-center justify-center bg-white/70 text-[22px] text-[#0078a8]">Leaflet</div>
      <div className="absolute bottom-0 right-0 flex h-[28px] w-[319px] items-center gap-[12px] bg-white/70 pl-[9px] text-[21px] text-[#222222]">
        <span>Map data ©2025 Google</span>
        <span>Terms</span>
      </div>
    </div>
  );
}
